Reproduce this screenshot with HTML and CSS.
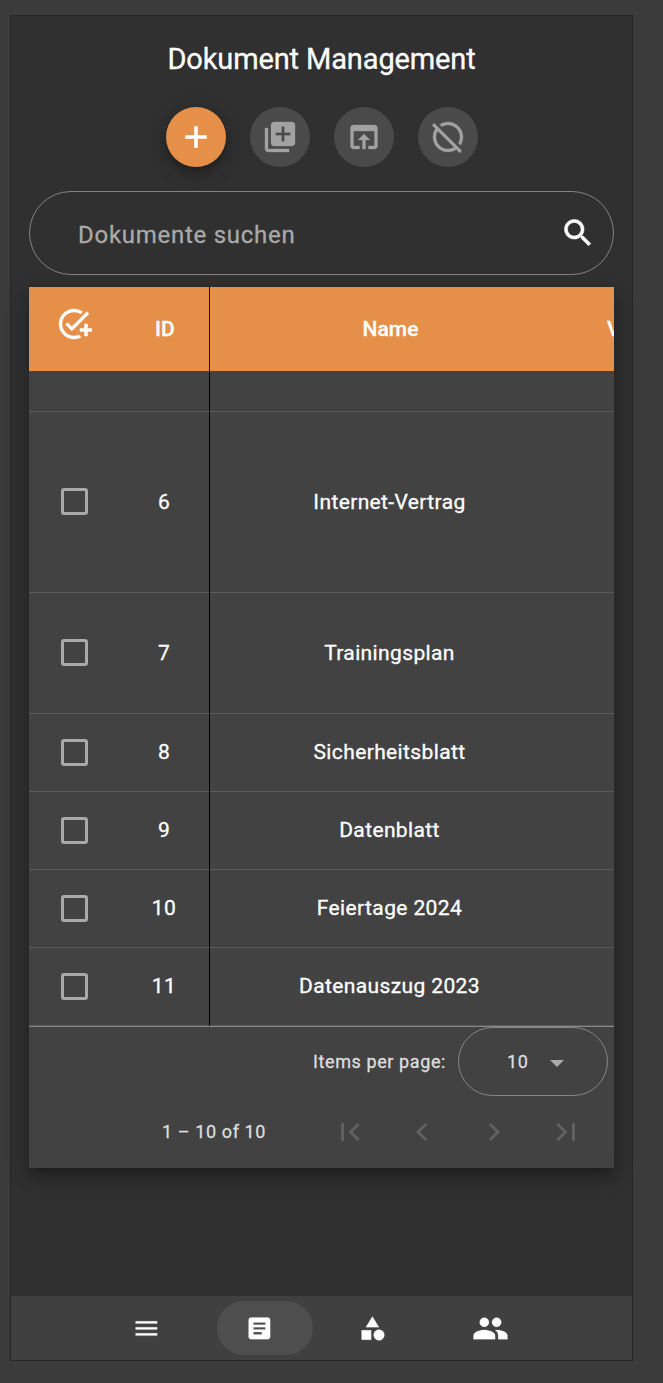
FILE: index.html
```html
<!DOCTYPE html>
<html lang="de">
<head>
<meta charset="utf-8">
<title>Dokument Management</title>
<link rel="stylesheet" href="styles.css">
</head>
<body>
<div class="app">
  <main class="content">
    <h1 class="title"><span>Dokument Management</span></h1>
    <div class="actions">
      <button class="fab fab-primary" aria-label="Neu"><svg class="icon" viewBox="0 0 24 24"><path d="M19 13h-6v6h-2v-6H5v-2h6V5h2v6h6v2z"/></svg></button>
      <button class="fab" aria-label="Mehrere"><svg class="icon" viewBox="0 0 24 24"><path d="M4 6H2v14c0 1.1.9 2 2 2h14v-2H4V6zm16-4H8c-1.1 0-2 .9-2 2v12c0 1.1.9 2 2 2h12c1.1 0 2-.9 2-2V4c0-1.1-.9-2-2-2zm-1 9h-4v4h-2v-4H9V9h4V5h2v4h4v2z"/></svg></button>
      <button class="fab" aria-label="Öffnen"><svg class="icon" viewBox="0 0 24 24"><path d="M19 4H5c-1.11 0-2 .9-2 2v12c0 1.1.89 2 2 2h4v-2H5V8h14v10h-4v2h4c1.1 0 2-.9 2-2V6c0-1.1-.89-2-2-2zm-7 6l-4 4h3v6h2v-6h3l-4-4z"/></svg></button>
      <button class="fab" aria-label="Ausblenden"><svg class="icon" viewBox="0 0 24 24"><path d="M2.81 2.81L1.39 4.22l2.27 2.27C2.61 8.07 2 9.96 2 12c0 5.52 4.48 10 10 10 2.04 0 3.93-.61 5.51-1.66l2.27 2.27 1.41-1.41L2.81 2.81zM12 20c-4.41 0-8-3.59-8-8 0-1.48.41-2.86 1.12-4.06l10.93 10.94C14.86 19.59 13.48 20 12 20zM7.94 5.12L6.49 3.66C8.07 2.61 9.96 2 12 2c5.52 0 10 4.48 10 10 0 2.04-.61 3.93-1.66 5.51l-1.46-1.46C19.59 14.86 20 13.48 20 12c0-4.41-3.59-8-8-8-1.48 0-2.86.41-4.06 1.12z"/></svg></button>
    </div>
    <div class="search">
      <span class="search-label">Dokumente suchen</span>
      <svg class="icon" viewBox="0 0 24 24"><path d="M15.5 14h-.79l-.28-.27C15.41 12.59 16 11.11 16 9.5 16 5.91 13.09 3 9.5 3S3 5.91 3 9.5 5.91 16 9.5 16c1.61 0 3.09-.59 4.23-1.57l.27.28v.79l5 4.99L20.49 19l-4.99-5zm-6 0C7.01 14 5 11.99 5 9.5S7.01 5 9.5 5 14 7.01 14 9.5 11.99 14 9.5 14z"/></svg>
    </div>
    <section class="card">
      <div class="table">
        <div class="row head">
          <div class="cell check"><svg class="icon" viewBox="0 0 24 24"><path d="M22 5.18L10.59 16.6l-4.24-4.24 1.41-1.41 2.83 2.83 10-10L22 5.18zM12 20c-4.42 0-8-3.58-8-8s3.58-8 8-8c1.57 0 3.04.46 4.28 1.25l1.45-1.45C16.1 2.67 14.13 2 12 2 6.48 2 2 6.48 2 12s4.48 10 10 10c1.73 0 3.36-.44 4.78-1.22l-1.5-1.5c-1 .46-2.11.72-3.28.72zm7-5h-3v2h3v3h2v-3h3v-2h-3v-3h-2v3z"/></svg></div>
          <div class="cell id">ID</div><div class="cell name">Name</div><div class="cell more">V</div>
        </div>
        <div class="row partial"><div class="cell check"></div><div class="cell id"></div></div>
        <div class="row tall"><div class="cell check"><i class="box"></i></div><div class="cell id">6</div><div class="cell name">Internet-Vertrag</div></div>
        <div class="row medium"><div class="cell check"><i class="box"></i></div><div class="cell id">7</div><div class="cell name">Trainingsplan</div></div>
        <div class="row"><div class="cell check"><i class="box"></i></div><div class="cell id">8</div><div class="cell name">Sicherheitsblatt</div></div>
        <div class="row"><div class="cell check"><i class="box"></i></div><div class="cell id">9</div><div class="cell name">Datenblatt</div></div>
        <div class="row"><div class="cell check"><i class="box"></i></div><div class="cell id">10</div><div class="cell name">Feiertage 2024</div></div>
        <div class="row"><div class="cell check"><i class="box"></i></div><div class="cell id">11</div><div class="cell name">Datenauszug 2023</div></div>
      </div>
      <footer class="paginator">
        <div class="page-size">
          <span>Items per page:</span>
          <div class="select"><span>10</span><i class="arrow"></i></div>
        </div>
        <div class="page-nav">
          <span class="range">1 – 10 of 10</span>
          <div class="page-btn"><svg class="icon" viewBox="0 0 24 24"><path d="M18.41 16.59L13.82 12l4.59-4.59L17 6l-6 6 6 6zM6 6h2v12H6z"/></svg></div>
          <div class="page-btn"><svg class="icon" viewBox="0 0 24 24"><path d="M15.41 7.41L14 6l-6 6 6 6 1.41-1.41L10.83 12z"/></svg></div>
          <div class="page-btn"><svg class="icon" viewBox="0 0 24 24"><path d="M10 6L8.59 7.41 13.17 12l-4.58 4.59L10 18l6-6z"/></svg></div>
          <div class="page-btn"><svg class="icon" viewBox="0 0 24 24"><path d="M5.59 7.41L10.18 12l-4.59 4.59L7 18l6-6-6-6zM16 6h2v12h-2z"/></svg></div>
        </div>
      </footer>
    </section>
  </main>
  <nav class="bottom-nav">
    <a class="tab"><svg class="nav-icon" viewBox="0 0 24 24"><path d="M3 18h18v-2H3v2zm0-5h18v-2H3v2zm0-7v2h18V6H3z"/></svg></a>
    <a class="tab active"><svg class="nav-icon" viewBox="0 0 24 24"><path d="M19 3H5c-1.1 0-2 .9-2 2v14c0 1.1.9 2 2 2h14c1.1 0 2-.9 2-2V5c0-1.1-.9-2-2-2zm-5 14H7v-2h7v2zm3-4H7v-2h10v2zm0-4H7V7h10v2z"/></svg></a>
    <a class="tab"><svg class="nav-icon" viewBox="0 0 24 24"><path d="M12 2l-5.5 9h11z"/><circle cx="17.5" cy="17.5" r="4.5"/><path d="M3 13.5h8v8H3z"/></svg></a>
    <a class="tab people"><svg class="nav-icon" viewBox="0 0 24 24"><path d="M16 11c1.66 0 2.99-1.34 2.99-3S17.66 5 16 5c-1.66 0-3 1.34-3 3s1.34 3 3 3zm-8 0c1.66 0 2.99-1.34 2.99-3S9.66 5 8 5C6.34 5 5 6.34 5 8s1.34 3 3 3zm0 2c-2.33 0-7 1.17-7 3.5V19h14v-2.5c0-2.33-4.67-3.5-7-3.5zm8 0c-.29 0-.62.02-.97.05 1.16.84 1.97 1.97 1.97 3.45V19h6v-2.5c0-2.33-4.67-3.5-7-3.5z"/></svg></a>
  </nav>
</div>
</body>
</html>
```
FILE: styles.css
```css
* { box-sizing: border-box; }
html, body { margin: 0; height: 100%; }
body {
  padding: 15px 30px 22px 10px;
  background: #3b3b3b;
  color: #fff;
  font-family: Roboto, "Liberation Sans", sans-serif;
  -webkit-text-stroke: .3px currentColor;
  overflow: hidden;
}
.app {
  display: flex;
  flex-direction: column;
  width: 623px;
  height: 1346px;
  background: #303030;
  border: 1px solid #262626;
}
.content { flex: 1; padding: 0 18px; }
.icon { display: block; width: 36px; height: 36px; fill: currentColor; flex: none; }

.title {
  margin: 0;
  height: 91px;
  padding-top: 22px;
  font-size: 29px;
  font-weight: 400;
  line-height: 42px;
  letter-spacing: -.13px;
  text-align: center;
  white-space: nowrap;
}
.actions { display: flex; justify-content: center; gap: 24px; height: 84px; }
.fab {
  display: flex;
  align-items: center;
  justify-content: center;
  width: 60px;
  height: 60px;
  padding: 0;
  border: 0;
  border-radius: 50%;
  background: #4a4a4a;
  color: #a2a2a2;
}
.fab .icon { stroke: currentColor; stroke-width: .2px; }
.fab-primary {
  background: #e58f49;
  color: #fff;
  box-shadow: 0 5px 8px -2px rgba(0,0,0,.2), 0 9px 15px rgba(0,0,0,.14), 0 2px 27px rgba(0,0,0,.12);
}
.fab-primary .icon, .search .icon { stroke: currentColor; stroke-width: .4px; }

.search {
  display: flex;
  align-items: center;
  justify-content: space-between;
  height: 84px;
  margin-bottom: 12px;
  padding: 0 17px 0 48px;
  border: 1px solid #838383;
  border-radius: 42px;
}
.search-label { padding-top: 3px; color: #a9a9a9; font-size: 24px; letter-spacing: .73px; }

.card {
  width: 585px;
  height: 881px;
  background: #424242;
  box-shadow: 0 8px 8px -5px rgba(0,0,0,.2), 0 12px 15px 1px rgba(0,0,0,.14), 0 5px 21px 3px rgba(0,0,0,.12);
}
.table { overflow: hidden; }
.row {
  display: grid;
  grid-template-columns: 90px 91px 359px 1fr;
  height: 78px;
  border-bottom: 1px solid #5b5b5b;
  font-size: 21px;
  letter-spacing: .375px;
}
.row.head { height: 84px; border: 0; background: #e58f49; font-weight: 500; letter-spacing: .1px; }
.row.partial { height: 41px; }
.row.tall { height: 181px; }
.row.medium { height: 121px; }
.cell { display: flex; align-items: center; justify-content: center; padding-bottom: 1px; white-space: nowrap; }
.cell.id { border-right: 1px solid #000; margin-bottom: -1px; padding-bottom: 2px; }
.cell.more { justify-content: flex-start; padding-left: 38px; }
.head .cell.name { padding-left: 2px; }
.head .cell.id { padding-left: 2px; }
.head .cell.check { padding-bottom: 10px; }
.head .check .icon { stroke: currentColor; stroke-width: .3px; }
.box { width: 27px; height: 27px; margin-left: 1px; border: 3px solid #a9a9a9; border-radius: 3px; }
.tall .check, .medium .check { padding-bottom: 2px; }

.paginator { border-top: 1px solid #878787; color: #dedede; font-size: 18px; letter-spacing: .6px; }
.page-size { display: flex; align-items: center; justify-content: flex-end; gap: 12px; height: 69px; padding-right: 6px; }
.select {
  display: flex;
  align-items: center;
  justify-content: flex-start;
  gap: 21.5px;
  width: 150px;
  height: 69px;
  padding-left: 48px;
  border: 1px solid #878787;
  border-radius: 35px;
}
.arrow { margin-top: 4px; border: 7.5px solid transparent; border-top-color: #ababab; border-bottom: 0; }
.page-nav { display: flex; align-items: center; justify-content: flex-end; height: 72px; padding-right: 12px; }
.range { margin-right: 48px; padding-bottom: 2px; }
.page-btn { display: flex; justify-content: center; width: 72px; color: #606060; }

.bottom-nav { display: flex; justify-content: center; gap: 17px; height: 64px; padding-top: 5px; background: #404040; }
.tab { display: flex; align-items: center; justify-content: center; width: 96px; height: 54px; padding-right: 12px; border-radius: 27px; }
.tab.active { background: #4e4e4e; }
.nav-icon { display: block; width: 28.8px; height: 28.8px; fill: #fff; stroke: #fff; stroke-width: .15px; flex: none; }
.people { padding-right: 1px; }
.people .nav-icon { width: 37px; height: 37px; }
```
